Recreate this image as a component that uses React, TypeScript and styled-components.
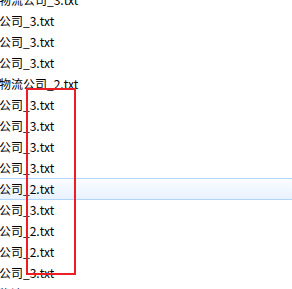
import React from "react";
import styled, { createGlobalStyle } from "styled-components";

const Global = createGlobalStyle`
  html, body { margin: 0; padding: 0; background: #ffffff; overflow: hidden; }
  #root { width: 292px; height: 289px; overflow: hidden; }
`;

const Page = styled.div`
  position: relative;
  width: 292px;
  height: 289px;
  overflow: hidden;
  background: #ffffff;
`;

const List = styled.div`
  display: flex;
  flex-direction: column;
  margin-top: -11px;
`;

const Row = styled.div<{ $selected?: boolean }>`
  height: 21px;
  display: flex;
  align-items: center;
  padding-left: 0;
  font-family: "Noto Sans CJK SC", "Noto Sans", sans-serif;
  font-size: 12px;
  color: #000;
  white-space: nowrap;
  background: ${(p) =>
    p.$selected ? "linear-gradient(#fbfdff, #e8f2fe)" : "transparent"};
  box-shadow: ${(p) =>
    p.$selected ? "inset 0 1px 0 #b2d5fa, 0 1px 0 #b2d5fa" : "none"};
`;

const Label = styled.span`
  margin-left: -1px;
`;

const Marker = styled.div`
  position: absolute;
  left: 26px;
  top: 88px;
  width: 50px;
  height: 187px;
  box-sizing: border-box;
  border: 2px solid #ee1c25;
  pointer-events: none;
`;

const rows = [
  "物流公司_3.txt",
  "公司_3.txt",
  "公司_3.txt",
  "公司_3.txt",
  "物流公司_2.txt",
  "公司_3.txt",
  "公司_3.txt",
  "公司_3.txt",
  "公司_3.txt",
  "公司_2.txt",
  "公司_3.txt",
  "公司_2.txt",
  "公司_2.txt",
  "公司_3.txt",
  "物流公司_3.txt",
];

export default function App() {
  return (
    <>
      <Global />
      <Page>
        <List>
          {rows.map((r, i) => (
            <Row key={i} $selected={i === 9}>
              <Label>{r}</Label>
            </Row>
          ))}
        </List>
        <Marker />
      </Page>
    </>
  );
}
